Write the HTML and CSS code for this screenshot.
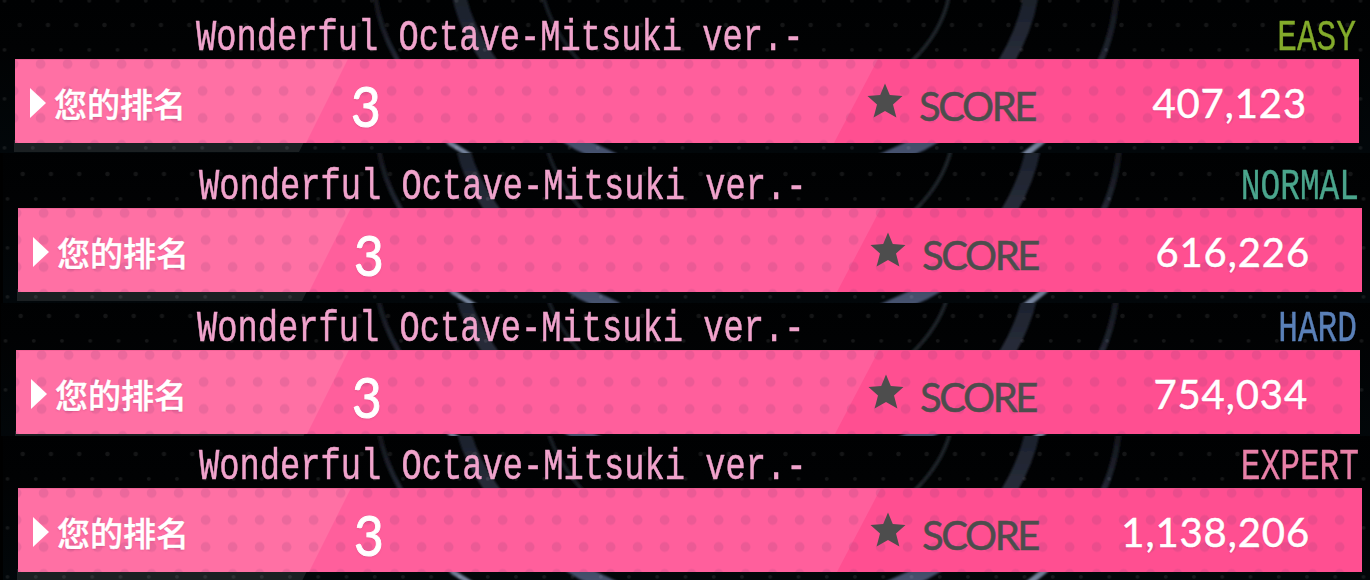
FILE: index.html
```html
<!DOCTYPE html>
<html lang="zh">
<head>
    <meta charset="UTF-8">
    <meta name="viewport" content="width=device-width, initial-scale=1.0">
    <title>Wonderful Octave - Ranking</title>
    <link rel="stylesheet" href="styles.css">
</head>
<body>
    <!-- shared shapes -->
    <svg class="defs" width="0" height="0">
        <defs>
            <pattern id="dots" x="-10" y="-12" width="28.25" height="49" patternUnits="userSpaceOnUse">
                <circle cx="14.5" cy="12.8" r="1.9"/>
                <circle cx="1.5" cy="37" r="2.2"/>
                <circle cx="29.75" cy="37" r="2.2"/>
            </pattern>
            <filter id="soft" x="-5%" y="-5%" width="110%" height="110%">
                <feGaussianBlur stdDeviation="1.2"/>
            </filter>
            <linearGradient id="arc" gradientUnits="userSpaceOnUse" x1="0" y1="0" x2="0" y2="153">
                <stop offset="0" stop-color="#1b202b"/>
                <stop offset="0.4" stop-color="#282d3a"/>
                <stop offset="1" stop-color="#46526f"/>
            </linearGradient>
            <linearGradient id="thin" gradientUnits="userSpaceOnUse" x1="0" y1="0" x2="0" y2="153">
                <stop offset="0" stop-color="#12151a"/>
                <stop offset="0.4" stop-color="#222632"/>
                <stop offset="1" stop-color="#77859f"/>
            </linearGradient>
            <linearGradient id="night" x1="0" y1="0" x2="0" y2="1">
                <stop offset="0" stop-color="#000102"/>
                <stop offset="0.3" stop-color="#010203"/>
                <stop offset="1" stop-color="#02070a"/>
            </linearGradient>
            <symbol id="backdrop" viewBox="0 0 1380 156">
                <rect width="1380" height="156" fill="url(#night)"/>
                <g fill="none" filter="url(#soft)">
                    <path d="M375 -4 Q380 30 397 59 Q420 108 450 143 L474 158" stroke="url(#thin)" stroke-width="5"/>
                    <path d="M459 -4 Q466 28 488 59 Q518 108 578 143 L614 160" stroke="url(#arc)" stroke-width="14"/>
                    <path d="M543 -4 Q552 30 580 62" stroke="#191c23" stroke-width="4"/>
                    <path d="M949 -4 Q942 32 911 62" stroke="#1d2127" stroke-width="4"/>
                    <path d="M1031 -4 Q1025 30 1006 62 Q980 112 922 143 L880 162" stroke="url(#arc)" stroke-width="15"/>
                    <path d="M1117 -4 L1113 22 Q1108 45 1100 62 Q1078 112 1040 143 L1018 160" stroke="url(#thin)" stroke-width="6"/>
                </g>
                <rect width="1380" height="156" fill="url(#dots)"/>
                <path d="M14 140H305L299 152H14Z" fill="#fff" opacity="0.1"/>
            </symbol>
            <pattern id="spots" x="12" y="-8.5" width="27" height="27" patternUnits="userSpaceOnUse">
                <circle cx="13.6" cy="13.5" r="4.9"/>
            </pattern>
            <symbol id="bar" viewBox="0 0 1344 84">
                <rect width="1344" height="84" fill="#ff4f91"/>
                <path d="M0 0H863L819 84H0Z" fill="#ff5f9c"/>
                <path d="M0 0H333L291 84H0Z" fill="#ff70a4"/>
                <rect width="1344" height="84" fill="url(#spots)"/>
                <rect width="1344" height="1" fill="#e8558a" opacity="0.5"/>
            </symbol>
            <symbol id="star" viewBox="0 0 36 36">
                <path d="M18 0.5L22.8 12L35.5 13L26 21.4L29.4 34.5L18 28L6.6 34.5L10 21.4L0.5 13L13.2 12Z"/>
            </symbol>
        </defs>
    </svg>

    <div class="row easy">
        <svg class="backdrop"><use href="#backdrop"/></svg>
        <div class="head">
            <span class="title">Wonderful Octave-Mitsuki ver.-</span>
            <span class="level">EASY</span>
        </div>
        <div class="bar">
            <svg class="bar-bg"><use href="#bar"/></svg>
            <div class="label"><i class="arrow"></i>您的排名</div>
            <div class="rank">3</div>
            <div class="score-label"><svg class="star"><use href="#star"/></svg><span>SCORE</span></div>
            <div class="score">407,123</div>
        </div>
    </div>

    <div class="row normal">
        <svg class="backdrop"><use href="#backdrop"/></svg>
        <div class="head">
            <span class="title">Wonderful Octave-Mitsuki ver.-</span>
            <span class="level">NORMAL</span>
        </div>
        <div class="bar">
            <svg class="bar-bg"><use href="#bar"/></svg>
            <div class="label"><i class="arrow"></i>您的排名</div>
            <div class="rank">3</div>
            <div class="score-label"><svg class="star"><use href="#star"/></svg><span>SCORE</span></div>
            <div class="score">616,226</div>
        </div>
    </div>

    <div class="row hard">
        <svg class="backdrop"><use href="#backdrop"/></svg>
        <div class="head">
            <span class="title">Wonderful Octave-Mitsuki ver.-</span>
            <span class="level">HARD</span>
        </div>
        <div class="bar">
            <svg class="bar-bg"><use href="#bar"/></svg>
            <div class="label"><i class="arrow"></i>您的排名</div>
            <div class="rank">3</div>
            <div class="score-label"><svg class="star"><use href="#star"/></svg><span>SCORE</span></div>
            <div class="score">754,034</div>
        </div>
    </div>

    <div class="row expert">
        <svg class="backdrop"><use href="#backdrop"/></svg>
        <div class="head">
            <span class="title">Wonderful Octave-Mitsuki ver.-</span>
            <span class="level">EXPERT</span>
        </div>
        <div class="bar">
            <svg class="bar-bg"><use href="#bar"/></svg>
            <div class="label"><i class="arrow"></i>您的排名</div>
            <div class="rank">3</div>
            <div class="score-label"><svg class="star"><use href="#star"/></svg><span>SCORE</span></div>
            <div class="score">1,138,206</div>
        </div>
    </div>
</body>
</html>
```
FILE: styles.css
```css
body {
    margin: 0;
    width: 1370px;
    height: 580px;
    overflow: hidden;
    background-color: #000;
    font-family: 'Lato', sans-serif;
}
.defs {
    position: absolute;
}
#dots {
    fill: rgba(255, 255, 255, 0.08);
}
#spots {
    fill: rgba(130, 60, 110, 0.16);
}
/* --shift: how far the row sits to the right, --head: height above the bar */
.row {
    position: relative;
    overflow: hidden;
    box-sizing: border-box;
    padding-left: calc(15px + var(--shift));
}
.easy {
    --shift: 0px;
    --head: 59px;
    --level: #83ab2b;
    height: 153px;
}
.normal {
    --shift: 3px;
    --head: 55px;
    --level: #4aa58c;
    height: 150px;
}
.hard {
    --shift: 1px;
    --head: 47px;
    --level: #5a80b8;
    height: 133px;
}
.expert {
    --shift: 3px;
    --head: 52px;
    --level: #e880a8;
    height: 144px;
}
.backdrop {
    position: absolute;
    left: var(--shift);
    top: calc(var(--head) - 59px);
    width: 1380px;
    height: 156px;
}
.head {
    position: relative;
    display: flex;
    justify-content: space-between;
    align-items: flex-end;
    box-sizing: border-box;
    width: 1344px;
    height: var(--head);
    padding-left: 181px;
    font-family: 'Liberation Mono', monospace;
    font-size: 45px;
    line-height: 41px;
    white-space: nowrap;
}
.title {
    color: #f0a3cc;
    width: 610px;
    transform: scaleX(0.75);
    transform-origin: left;
    -webkit-text-stroke: 0.5px #f0a3cc;
}
.level {
    color: var(--level);
    transform: scaleX(0.73);
    transform-origin: right;
    margin-right: 3px;
    -webkit-text-stroke: 0.4px var(--level);
}
.bar {
    position: relative;
    display: grid;
    grid-template-columns: 286px 566px 240px 1fr;
    align-items: center;
    width: 1344px;
    height: 84px;
}
.bar-bg {
    position: absolute;
    width: 1344px;
    height: 84px;
}
.label,
.rank,
.score-label,
.score {
    position: relative;
    color: #fff;
    white-space: nowrap;
}
.label {
    display: flex;
    align-items: center;
    padding-top: 4px;
    padding-left: 15px;
    font-family: 'Noto Sans CJK SC', sans-serif;
    font-size: 33px;
    font-weight: 500;
    line-height: 40px;
    -webkit-text-stroke: 0.4px #fff;
    text-shadow: 0 1px 2px rgba(160, 40, 90, 0.3);
}
.arrow {
    width: 16px;
    height: 30px;
    margin-right: 8px;
    background-color: #fff;
    clip-path: polygon(0 0, 100% 50%, 0 100%);
}
.rank {
    width: 130px;
    padding-top: 8px;
    text-align: center;
    font-size: 57px;
    line-height: 60px;
    transform: scaleX(0.9);
    -webkit-text-stroke: 1px #fff;
    text-shadow: 0 1px 2px rgba(160, 40, 90, 0.35);
}
.score-label {
    display: flex;
    align-items: center;
    color: #4d4d4d;
    font-size: 40px;
    line-height: 48px;
    letter-spacing: -2.4px;
}
.score-label span {
    padding-top: 9px;
    -webkit-text-stroke: 0.5px #4d4d4d;
}
.star {
    width: 36px;
    height: 36px;
    margin-right: 16px;
    fill: #4d4d4d;
}
.score {
    padding-top: 4px;
    padding-right: 52px;
    text-align: right;
    font-size: 40px;
    line-height: 48px;
    letter-spacing: 0.9px;
    -webkit-text-stroke: 0.5px #fff;
    text-shadow: 0 1px 2px rgba(160, 40, 90, 0.3);
}
```
